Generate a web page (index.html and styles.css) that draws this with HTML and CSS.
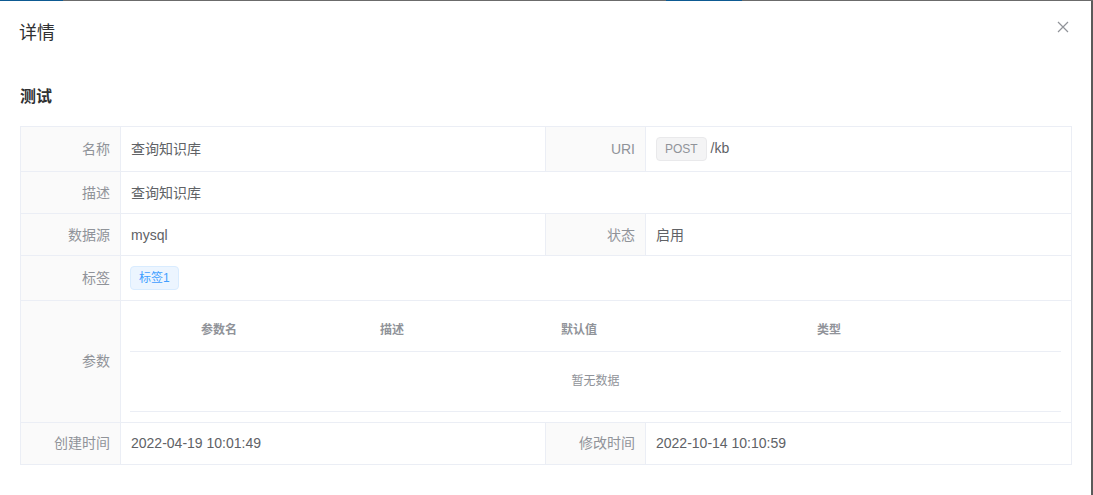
FILE: index.html
```html
<!DOCTYPE html>
<html lang="zh-CN">
<head>
    <meta charset="UTF-8">
    <title>详情</title>
    <link rel="stylesheet" href="styles.css">
</head>
<body>
    <div class="backdrop-strip"></div>

    <div class="dialog">
        <div class="dialog-header">
            <span class="dialog-title">详情</span>
            <button class="dialog-close" aria-label="关闭">
                <svg width="12" height="12" viewBox="0 0 12 12">
                    <path d="M1 1 L11 11 M11 1 L1 11" stroke="#909399" stroke-width="1.2" fill="none"/>
                </svg>
            </button>
        </div>

        <div class="dialog-body">
            <div class="desc-title">测试</div>

            <table class="desc-table">
                <colgroup>
                    <col class="col-label">
                    <col class="col-value">
                    <col class="col-label">
                    <col>
                </colgroup>
                <tr class="row-md">
                    <th>名称</th>
                    <td>查询知识库</td>
                    <th>URI</th>
                    <td><span class="tag tag-info">POST</span> /kb</td>
                </tr>
                <tr class="row-sm">
                    <th>描述</th>
                    <td colspan="3">查询知识库</td>
                </tr>
                <tr class="row-sm">
                    <th>数据源</th>
                    <td>mysql</td>
                    <th>状态</th>
                    <td>启用</td>
                </tr>
                <tr class="row-md">
                    <th>标签</th>
                    <td colspan="3" class="tag-cell"><span class="tag tag-primary">标签1</span></td>
                </tr>
                <tr>
                    <th>参数</th>
                    <td colspan="3" class="param-cell">
                        <table class="param-table">
                            <colgroup>
                                <col style="width: 178px">
                                <col style="width: 168px">
                                <col style="width: 206px">
                                <col style="width: 294px">
                                <col>
                            </colgroup>
                            <thead>
                                <tr>
                                    <th>参数名</th>
                                    <th>描述</th>
                                    <th>默认值</th>
                                    <th>类型</th>
                                    <th></th>
                                </tr>
                            </thead>
                            <tbody>
                                <tr>
                                    <td colspan="5" class="empty">暂无数据</td>
                                </tr>
                            </tbody>
                        </table>
                    </td>
                </tr>
                <tr class="row-sm">
                    <th>创建时间</th>
                    <td>2022-04-19 10:01:49</td>
                    <th>修改时间</th>
                    <td>2022-10-14 10:10:59</td>
                </tr>
            </table>
        </div>
    </div>
</body>
</html>
```

FILE: styles.css
```css
* {
    box-sizing: border-box;
}

body {
    margin: 0;
    background-color: #5a5a5a;
    font-family: "Liberation Sans", "Noto Sans CJK SC", sans-serif;
    font-size: 14px;
    color: #606266;
    height: 495px;
    overflow: hidden;
}

/* 遮罩后面露出来的一条 */
.backdrop-strip {
    height: 1px;
    background: linear-gradient(to right,
        #0d5a92 0, #0d5a92 63px,
        #6b6b6b 63px, #6b6b6b 666px,
        #0d5a92 666px, #0d5a92 742px,
        #6b6b6b 742px);
}

.dialog {
    width: 1091px;
    height: 494px;
    background-color: #ffffff;
}

.dialog-header {
    display: flex;
    justify-content: space-between;
    align-items: flex-start;
    padding: 20px 20px 10px 19px;
}

.dialog-title {
    font-size: 18px;
    line-height: 24px;
    color: #303133;
}

.dialog-close {
    border: none;
    background: none;
    padding: 0;
    margin: 0 2px 0 0;
    width: 12px;
    height: 12px;
    cursor: pointer;
    display: flex;
}

.dialog-body {
    padding: 30px 20px;
}

.desc-title {
    font-size: 16px;
    font-weight: bold;
    color: #303133;
    line-height: 24px;
    margin-bottom: 17px;
}

.desc-table {
    width: 1052px;
    border-collapse: collapse;
    table-layout: fixed;
}

.desc-table .col-label {
    width: 100px;
}

.desc-table .col-value {
    width: 425px;
}

.desc-table > tbody > tr > th,
.desc-table > tbody > tr > td {
    border: 1px solid #ebeef5;
    padding: 0 10px;
    line-height: 20px;
    vertical-align: middle;
}

.desc-table > tbody > tr > th {
    background-color: #fafafa;
    color: #909399;
    font-weight: normal;
    text-align: right;
}

.desc-table > tbody > tr > td {
    text-align: left;
}

.row-sm {
    height: 42px;
}

.row-md {
    height: 45px;
}

.tag {
    display: inline-block;
    height: 24px;
    line-height: 22px;
    padding: 0 8px;
    font-size: 12px;
    border-radius: 4px;
    border: 1px solid;
    vertical-align: middle;
}

.tag-info {
    background-color: #f4f4f5;
    border-color: #e9e9eb;
    color: #909399;
}

.tag-primary {
    background-color: #ecf5ff;
    border-color: #d9ecff;
    color: #409eff;
}

.desc-table > tbody > tr > td.tag-cell {
    padding-left: 9px;
}

.desc-table > tbody > tr > td.param-cell {
    padding: 9px 10px 10px 9px;
}

.param-table {
    width: 100%;
    border-collapse: collapse;
    table-layout: fixed;
    font-size: 12px;
}

.param-table th {
    height: 41px;
    padding: 0;
    color: #909399;
    font-weight: bold;
    text-align: center;
    border-bottom: 1px solid #ebeef5;
}

.param-table td.empty {
    height: 60px;
    text-align: center;
    color: #909399;
    border-bottom: 1px solid #ebeef5;
}
```
